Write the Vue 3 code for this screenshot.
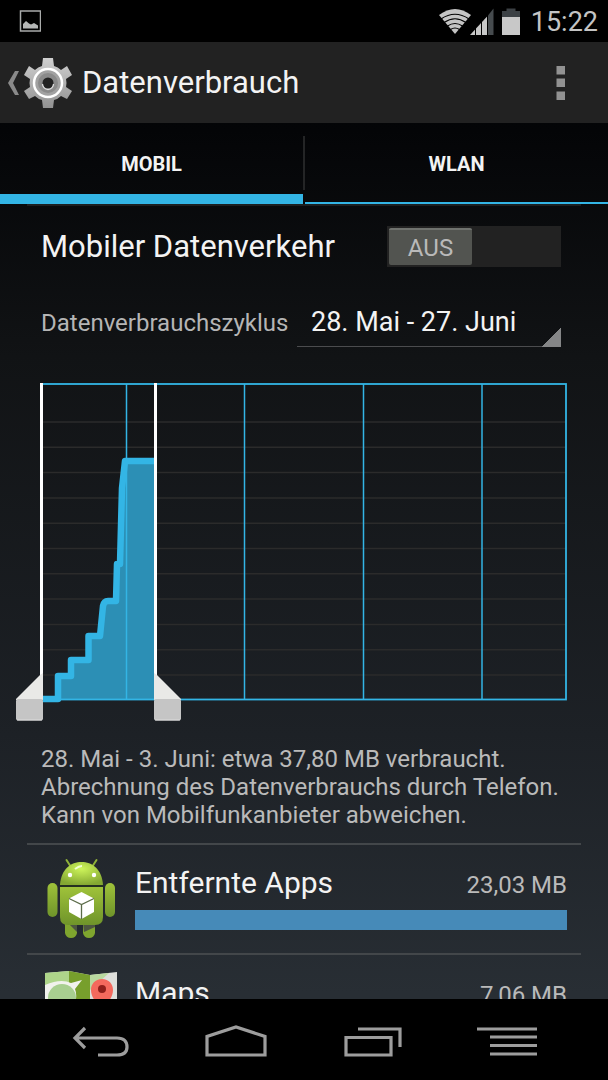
<template>
  <div class="screen">
    <header class="status-bar">
      <svg class="status-image" width="22" height="22" viewBox="0 0 22 22">
        <rect x="1.500" y="1" width="20" height="20" fill="none" stroke="#a9abaa" stroke-width="1.5" />
        <path d="M4 18.500V14L7 11L10 13.500L12 14.500L15 13L19 15.500V18.500Z" fill="#b4b6b5" />
      </svg>
      <div class="status-icons">
        <svg width="32" height="27" viewBox="0 0 32 27">
          <path d="M0 7Q16 -5 32 7L16 26Z" fill="#c4c4c4" />
          <g fill="none" stroke="#000" stroke-width="1.1">
            <path d="M2 11Q16 1.500 30 11" />
            <path d="M5 14.500Q16 7 27 14.500" />
            <path d="M8.500 18Q16 13 23.500 18" />
            <path d="M11.500 21.500Q16 18.500 20.500 21.500" />
          </g>
        </svg>
        <svg class="signal" width="24" height="27" viewBox="0 0 24 27">
          <path d="M0 27L18 7.500V27Z" fill="#c8c8c8" />
          <path d="M18 7.500L23.500 0.500V27H18Z" fill="#464b4e" />
          <path d="M5.500 20V27M11.500 13V27M17.500 7V27" stroke="#000" stroke-width="1" />
        </svg>
        <svg class="battery" width="18" height="27" viewBox="0 0 18 27">
          <path d="M0 3H4.500V0.500H13.500V3H18V9H0Z" fill="#3c4145" />
          <rect y="9" width="18" height="18" fill="#c8c8c8" />
        </svg>
        <span class="clock">15:22</span>
      </div>
    </header>

    <div class="action-bar">
      <button class="up" type="button" aria-label="Zurück">
        <svg width="13" height="26" viewBox="0 0 13 26">
          <path d="M8 1H12L6 13L12 25H8L1 13Z" fill="#8a8a8a" />
        </svg>
        <svg class="gear" width="50" height="52" viewBox="0 0 50 52">
          <defs>
            <linearGradient id="gearFill" x1="0" y1="0" x2="0" y2="1">
              <stop offset="0" stop-color="#d0d0d0" />
              <stop offset="1" stop-color="#929292" />
            </linearGradient>
          </defs>
          <path
            fill="url(#gearFill)"
            d="M20 1H30L31 9Q35 10 38 13L44 9L49 18L43 22Q44 26 43 30L49 34L44 42L38 39Q35 42 31 43L30 51H20L19 43Q15 42 12 39L6 42L1 34L7 30Q6 26 7 22L1 18L6 9L12 13Q15 10 19 9Z"
          />
          <circle cx="25" cy="26" r="14" fill="#a2a2a2" stroke="#fff" stroke-width="2.500" />
          <circle cx="25" cy="26" r="10" fill="#8a8a8a" />
          <circle cx="25" cy="26" r="5.500" fill="#222" />
          <path d="M19.500 27A5.500 5.500 0 0 0 30.500 27" fill="none" stroke="#ddd" stroke-width="1.300" />
        </svg>
      </button>
      <h1>Datenverbrauch</h1>
      <button class="overflow" type="button" aria-label="Weitere Optionen">
        <svg width="10" height="36" viewBox="0 0 10 36">
          <path d="M0.500 1H9V9.500H0.500ZM0.500 13.500H9V22H0.500ZM0.500 26.500H9V35H0.500Z" fill="#929292" />
        </svg>
      </button>
    </div>

    <nav class="tabs">
      <button
        v-for="tab in tabs"
        :key="tab"
        type="button"
        class="tab"
        :class="{ active: tab === activeTab }"
        @click="activeTab = tab"
      >
        <span>{{ tab }}</span>
      </button>
    </nav>

    <main class="content">
      <section class="settings">
        <div class="setting mobile-data">
          <label for="mobile-data">Mobiler Datenverkehr</label>
          <div class="switch" :class="{ on: mobileData }">
            <input id="mobile-data" v-model="mobileData" type="checkbox" role="switch" />
            <span class="thumb">{{ mobileData ? 'AN' : 'AUS' }}</span>
          </div>
        </div>
        <div class="setting cycle">
          <label for="cycle">Datenverbrauchszyklus</label>
          <div class="spinner">
            <select id="cycle" v-model="cycle">
              <option v-for="c in cycles" :key="c">{{ c }}</option>
            </select>
          </div>
        </div>
      </section>

      <svg class="chart" viewBox="0 0 608 340" role="img" aria-label="Datenverbrauch im Zyklus">
        <path v-for="y in gridRows" :key="y" :d="`M42 ${y}H566`" stroke="#2b2b2b" stroke-width="1.500" />
        <path :d="`${usage}V317H56Z`" fill="#2c8fb5" />
        <g fill="none" stroke="#33b5e5">
          <rect x="41" y="1" width="525" height="315.500" stroke-width="1.800" />
          <path v-for="x in weeks" :key="x" :d="`M${x} 1V317`" stroke-width="1.500" />
          <path :d="usage" stroke-width="6.500" stroke-linejoin="round" />
        </g>
        <g v-for="h in handles" :key="h.x">
          <path :d="`M${h.x} 0V317`" stroke="#fff" stroke-width="3" />
          <path :d="h.flag" fill="#e9e9e7" />
          <rect :x="h.boxX" y="316" width="27" height="21.500" rx="2" fill="#c5c5c5" />
          <path :d="`M${h.boxX + 1} 337H${h.boxX + 26}`" stroke="#ddd" />
        </g>
      </svg>

      <p class="summary">
        28. Mai - 3. Juni: etwa 37,80 MB verbraucht.<br />
        Abrechnung des Datenverbrauchs durch Telefon.<br />
        Kann von Mobilfunkanbieter abweichen.
      </p>

      <ul class="apps">
        <li v-for="app in apps" :key="app.name" class="app">
          <svg v-if="app.icon === 'android'" class="app-icon" width="72" height="82" viewBox="0 0 72 82">
            <defs>
              <linearGradient id="robot" x1="0" y1="0" x2="0" y2="1">
                <stop offset="0" stop-color="#9fc23a" />
                <stop offset="1" stop-color="#6f942a" />
              </linearGradient>
              <radialGradient id="head" cx="0.5" cy="0.3" r="0.7">
                <stop offset="0" stop-color="#cdf45a" />
                <stop offset="1" stop-color="#84a832" />
              </radialGradient>
            </defs>
            <path d="M21.500 2L26 9M51.500 2L47 9" stroke="#8fb238" stroke-width="2" stroke-linecap="round" />
            <path d="M15 27C16 11 26 4 36.500 4C47 4 57 11 58 27Z" fill="url(#head)" />
            <path d="M30 11Q34 8 37 8" stroke="#f0ffd0" stroke-width="2" fill="none" />
            <circle cx="25" cy="17" r="2.200" fill="#fff" />
            <circle cx="49" cy="17" r="2.200" fill="#fff" />
            <rect x="2.500" y="25" width="10" height="34" rx="5" fill="url(#robot)" />
            <rect x="60" y="25" width="10" height="34" rx="5" fill="url(#robot)" />
            <path d="M20 64H32V75Q31 80 26 80Q21 80 20 75Z" fill="#7fa52e" />
            <path d="M38 64H50V75Q49 80 44 80Q39 80 38 75Z" fill="#7fa52e" />
            <path d="M22 64H32V74ZM38 64H50V69L39 74Z" fill="#4d5640" />
            <path d="M15 29H58V59Q58 67 50 67H23Q15 67 15 59Z" fill="url(#robot)" />
            <path d="M15 28H58" stroke="#26331c" stroke-width="1.500" />
            <path d="M36.500 34L49 40.500V54L36.500 61L24 54V40.500Z" fill="#fff" />
            <path d="M24 40.500L36.500 46.500L49 40.500M36.500 46.500V61" stroke="#5b6b48" stroke-width="1.300" fill="none" />
          </svg>
          <svg v-else class="app-icon" width="72" height="82" viewBox="0 0 72 82">
            <path d="M0 5L24 3L45 7L72 4V73L45 77L24 73L0 76Z" fill="#dedfdb" />
            <path d="M0 5L24 3V73L0 76Z" fill="#aed58a" />
            <path d="M24 3L45 7V77L24 73Z" fill="#779f2c" />
            <path d="M45 7L64 5L53 15L45 22Z" fill="#b9d99f" />
            <path d="M0 17Q16 10 26 15L37 12L30 21Q34 31 25 46L0 46Z" fill="#f1f2ed" />
            <circle cx="17" cy="30" r="14" fill="#a8cf90" />
            <path d="M57 11C50 11 46 16 46 22C46 33 57 37 57 48C57 37 68 33 68 22C68 16 64 11 57 11Z" fill="#f4695d" />
            <circle cx="57" cy="21" r="4" fill="#8f1f1b" />
          </svg>
          <div class="app-body">
            <div class="app-line">
              <span class="app-name">{{ app.name }}</span>
              <span class="app-size">{{ app.size }}</span>
            </div>
            <div class="bar">
              <div class="bar-fill" :style="{ width: app.percent + '%' }"></div>
            </div>
          </div>
        </li>
      </ul>
    </main>

    <footer class="nav-bar">
      <button v-for="item in navItems" :key="item.label" type="button" :aria-label="item.label">
        <svg width="64" height="36" viewBox="0 0 64 36">
          <path :d="item.path" fill="none" stroke="#9d9d9d" stroke-width="3.200" />
        </svg>
      </button>
    </footer>
  </div>
</template>

<script setup>
import { ref } from 'vue';

const tabs = ['MOBIL', 'WLAN'];
const activeTab = ref('MOBIL');

const mobileData = ref(false);

const cycles = ['28. Mai - 27. Juni', '28. Apr. - 27. Mai'];
const cycle = ref(cycles[0]);

// Chart geometry
const gridRows = Array.from({ length: 11 }, (_, i) => 39 + i * 25.3);
const weeks = [126.5, 244.5, 363.5, 482];
const usage =
  'M43 316H58V293H71V277H88.500V253H100L103 223Q104 218 108 218H116L117 181H120L122 105L125 78H155';

const handles = [
  { x: 41.5, boxX: 16, flag: 'M40 292L43 290V317H16V316Z' },
  { x: 155.5, boxX: 154, flag: 'M154 290L157 292L181 316V317H154Z' }
];

const apps = [
  { name: 'Entfernte Apps', size: '23,03 MB', percent: 100, icon: 'android' },
  { name: 'Maps', size: '7,06 MB', percent: 31, icon: 'maps' }
];

const navItems = [
  { label: 'Zurück', path: 'M17 6L7 16L17 26M7 16H49Q59 16 59 25Q59 33 49 33H30' },
  { label: 'Startbildschirm', path: 'M3 33V14.500L32 5L61 14.500V33Z' },
  { label: 'Letzte Apps', path: 'M6 15.500H51V33H6ZM18 7H60V25' },
  { label: 'Menü', path: 'M1 7H61M14 15H61M14 23.500H61M14 32H61' }
];
</script>

<style>
body {
  margin: 0;
  background: #000;
}
</style>

<style scoped>
.screen {
  display: flex;
  flex-direction: column;
  height: 100vh;
  overflow: hidden;
  font-family: Roboto, "Liberation Sans", sans-serif;
  color: #f3f3f3;
  background: linear-gradient(#000 0, #040507 12%, #111315 33%, #1d2126 68%, #282e34 92%);
}

button {
  padding: 0;
  border: 0;
  background: none;
  color: inherit;
  font: inherit;
}

svg {
  display: block;
}

.status-bar {
  display: flex;
  flex: none;
  align-items: center;
  justify-content: space-between;
  height: 42px;
  padding: 0 10px 0 19px;
  background: #000;
}

.status-icons {
  display: flex;
  align-items: center;
}

.signal {
  margin-left: -1px;
}

.battery {
  margin: 0 11px 0 8px;
}

.clock {
  font-size: 27px;
  line-height: 42px;
  padding-top: 2px;
  color: #c4c4c4;
}

.action-bar {
  display: flex;
  flex: none;
  align-items: center;
  height: 81px;
  padding: 0 42px 0 7px;
  background: #222;
}

.up {
  display: flex;
  align-items: center;
  gap: 3px;
}

h1 {
  flex: 1;
  margin: 0 0 0 9px;
  font-size: 31px;
  font-weight: 400;
  line-height: 42px;
}

.tabs {
  display: flex;
  flex: none;
  gap: 2px;
  height: 81px;
}

.tab {
  position: relative;
  flex: 1;
  box-sizing: border-box;
  padding-top: 2px;
  border-bottom: 2px solid #33b5e5;
  font-size: 20px;
  font-weight: 700;
}

.tab.active {
  border-bottom-width: 10px;
  padding-top: 10px;
}

.tab + .tab::before {
  content: "";
  position: absolute;
  top: 13px;
  left: -2px;
  width: 2px;
  height: 54px;
  background: #242526;
}

.content {
  flex: 1;
  min-height: 0;
  overflow: hidden;
}

.settings {
  margin: 0 27px;
  padding: 0 20px 0 14px;
  border-top: 2px solid #1d1f20;
}

.setting {
  display: flex;
  align-items: center;
  justify-content: space-between;
}

.mobile-data {
  height: 81px;
  font-size: 31px;
}

.switch {
  position: relative;
  display: flex;
  box-sizing: border-box;
  width: 174px;
  height: 41px;
  padding: 2px;
  background: #222;
}

.switch.on {
  justify-content: flex-end;
}

.switch input {
  position: absolute;
  inset: 0;
  width: 100%;
  height: 100%;
  margin: 0;
  opacity: 0;
}

.thumb {
  box-sizing: border-box;
  width: 83px;
  border-top: 2px solid #70736f;
  border-radius: 2px;
  background: #525450;
  color: #b9b9b9;
  font-size: 24px;
  line-height: 36px;
  text-align: center;
}

.cycle {
  height: 71px;
}

.cycle label {
  color: #b5b5b5;
  font-size: 24px;
}

.spinner {
  position: relative;
  width: 264px;
}

.spinner::after {
  content: "";
  position: absolute;
  right: 0;
  bottom: 0;
  width: 20px;
  height: 20px;
  background: linear-gradient(135deg, transparent 50%, #858687 50%);
  pointer-events: none;
}

.spinner select {
  width: 100%;
  height: 48px;
  padding: 0 0 0 14px;
  border: 0;
  border-bottom: 1px solid #4b4c4e;
  border-radius: 0;
  appearance: none;
  background: transparent;
  color: #f3f3f3;
  font-family: inherit;
  font-size: 27px;
}

.chart {
  width: 100%;
  margin-top: 25px;
}

.summary {
  margin: 22px 41px 14px;
  color: #bababa;
  font-size: 24px;
  line-height: 28px;
  white-space: nowrap;
}

.apps {
  margin: 0 27px;
  padding: 0;
  list-style: none;
}

.app {
  display: flex;
  box-sizing: border-box;
  height: 110px;
  padding: 13px 14px 0 18px;
  border-top: 2px solid #43474a;
}

.app-icon {
  flex: none;
}

.app-body {
  flex: 1;
  margin-left: 18px;
}

.app-line {
  display: flex;
  align-items: baseline;
  justify-content: space-between;
  line-height: 50px;
}

.app-name {
  font-size: 30px;
}

.app-size {
  color: #bababa;
  font-size: 24px;
}

.bar-fill {
  height: 20px;
  background: #468ab8;
}

.nav-bar {
  display: flex;
  flex: none;
  height: 81px;
  padding: 0 32px;
  background: #000;
}

.nav-bar button {
  display: flex;
  flex: 1;
  align-items: center;
  justify-content: center;
}
</style>
